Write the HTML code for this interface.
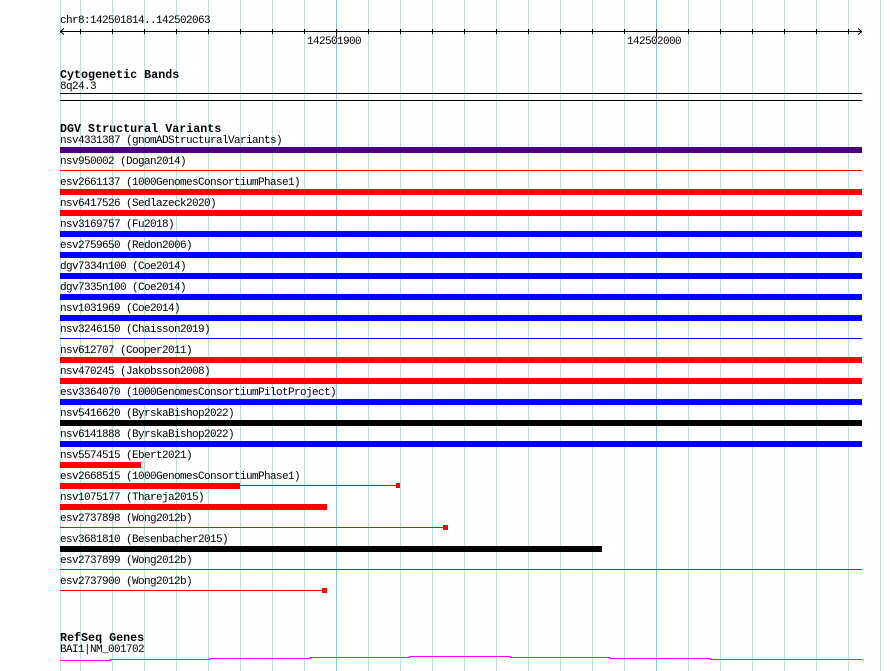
<!DOCTYPE html>
<html><head><meta charset="utf-8"><style>
html,body{margin:0;padding:0;background:#fff;width:890px;height:671px;overflow:hidden}
svg{display:block}
text{font-family:"Liberation Mono",monospace;font-size:11px;letter-spacing:-0.6px;fill:#000}
.b{font-size:11.7px;font-weight:bold;letter-spacing:0}
</style></head><body>
<svg width="890" height="671" viewBox="0 0 890 671" xmlns="http://www.w3.org/2000/svg" shape-rendering="crispEdges">
<g stroke="#b6e0e6" stroke-width="1">
<line x1="60.5" y1="0" x2="60.5" y2="671"/>
<line x1="80.5" y1="0" x2="80.5" y2="671"/><line x1="112.5" y1="0" x2="112.5" y2="671"/><line x1="144.5" y1="0" x2="144.5" y2="671"/><line x1="176.5" y1="0" x2="176.5" y2="671"/><line x1="208.5" y1="0" x2="208.5" y2="671"/><line x1="240.5" y1="0" x2="240.5" y2="671"/><line x1="272.5" y1="0" x2="272.5" y2="671"/><line x1="304.5" y1="0" x2="304.5" y2="671"/><line x1="368.5" y1="0" x2="368.5" y2="671"/><line x1="400.5" y1="0" x2="400.5" y2="671"/><line x1="432.5" y1="0" x2="432.5" y2="671"/><line x1="464.5" y1="0" x2="464.5" y2="671"/><line x1="496.5" y1="0" x2="496.5" y2="671"/><line x1="528.5" y1="0" x2="528.5" y2="671"/><line x1="560.5" y1="0" x2="560.5" y2="671"/><line x1="592.5" y1="0" x2="592.5" y2="671"/><line x1="624.5" y1="0" x2="624.5" y2="671"/><line x1="688.5" y1="0" x2="688.5" y2="671"/><line x1="720.5" y1="0" x2="720.5" y2="671"/><line x1="752.5" y1="0" x2="752.5" y2="671"/><line x1="784.5" y1="0" x2="784.5" y2="671"/><line x1="816.5" y1="0" x2="816.5" y2="671"/><line x1="848.5" y1="0" x2="848.5" y2="671"/><line x1="880.5" y1="0" x2="880.5" y2="671"/>
</g>
<g stroke="#8ec4dc"><line x1="336.5" y1="0" x2="336.5" y2="671"/><line x1="656.5" y1="0" x2="656.5" y2="671"/></g>
<!-- ruler -->
<text x="60" y="23">chr8:142501814..142502063</text>
<g stroke="#000">
<line x1="60" y1="31.5" x2="862" y2="31.5"/>
<line x1="60" y1="31.5" x2="64" y2="28.5"/><line x1="60" y1="31.5" x2="64" y2="34.5"/>
<line x1="862" y1="31.5" x2="858" y2="28.5"/><line x1="862" y1="31.5" x2="858" y2="34.5"/>
<path d="M80.5 29v5M112.5 29v5M144.5 29v5M176.5 29v5M208.5 29v5M240.5 29v5M272.5 29v5M304.5 29v5M368.5 29v5M400.5 29v5M432.5 29v5M464.5 29v5M496.5 29v5M528.5 29v5M560.5 29v5M592.5 29v5M624.5 29v5M688.5 29v5M720.5 29v5M752.5 29v5M784.5 29v5M816.5 29v5M848.5 29v5M336.5 29v8M656.5 29v8"/>
</g>
<text x="307" y="44">142501900</text>
<text x="627" y="44">142502000</text>
<!-- cyto -->
<text class="b" x="60" y="78">Cytogenetic Bands</text>
<text x="60" y="89">8q24.3</text>
<rect x="60" y="93" width="802" height="1" fill="#000"/>
<rect x="60" y="100" width="802" height="1" fill="#000"/>
<!-- DGV -->
<text class="b" x="60" y="132">DGV Structural Variants</text>
<g>
<text x="60" y="143">nsv4331387 (gnomADStructuralVariants)</text><rect x="60" y="147" width="802" height="6" fill="#4b0082"/>
<text x="60" y="164">nsv950002 (Dogan2014)</text><rect x="60" y="170" width="802" height="1" fill="#f00"/>
<text x="60" y="185">esv2661137 (1000GenomesConsortiumPhase1)</text><rect x="60" y="189" width="802" height="6" fill="#f00"/>
<text x="60" y="206">nsv6417526 (Sedlazeck2020)</text><rect x="60" y="210" width="802" height="6" fill="#f00"/>
<text x="60" y="227">nsv3169757 (Fu2018)</text><rect x="60" y="231" width="802" height="6" fill="#00f"/>
<text x="60" y="248">esv2759650 (Redon2006)</text><rect x="60" y="252" width="802" height="6" fill="#00f"/>
<text x="60" y="269">dgv7334n100 (Coe2014)</text><rect x="60" y="273" width="802" height="6" fill="#00f"/>
<text x="60" y="290">dgv7335n100 (Coe2014)</text><rect x="60" y="294" width="802" height="6" fill="#00f"/>
<text x="60" y="311">nsv1031969 (Coe2014)</text><rect x="60" y="315" width="802" height="6" fill="#00f"/>
<text x="60" y="332">nsv3246150 (Chaisson2019)</text><rect x="60" y="338" width="802" height="1" fill="#00f"/>
<text x="60" y="353">nsv612707 (Cooper2011)</text><rect x="60" y="357" width="802" height="6" fill="#f00"/>
<text x="60" y="374">nsv470245 (Jakobsson2008)</text><rect x="60" y="378" width="802" height="6" fill="#f00"/>
<text x="60" y="395">esv3364070 (1000GenomesConsortiumPilotProject)</text><rect x="60" y="399" width="802" height="6" fill="#00f"/>
<text x="60" y="416">nsv5416620 (ByrskaBishop2022)</text><rect x="60" y="420" width="802" height="6" fill="#000"/>
<text x="60" y="437">nsv6141888 (ByrskaBishop2022)</text><rect x="60" y="441" width="802" height="6" fill="#00f"/>
<text x="60" y="458">nsv5574515 (Ebert2021)</text><rect x="60" y="462" width="81" height="6" fill="#f00"/>
<text x="60" y="479">esv2668515 (1000GenomesConsortiumPhase1)</text><rect x="60" y="483" width="180" height="6" fill="#f00"/><rect x="60" y="485" width="338" height="1" fill="#f00"/><rect x="396" y="483" width="4" height="5" fill="#f00"/>
<text x="60" y="500">nsv1075177 (Thareja2015)</text><rect x="60" y="504" width="267" height="6" fill="#f00"/>
<text x="60" y="521">esv2737898 (Wong2012b)</text><rect x="60" y="527" width="385" height="1" fill="#f00"/><rect x="443" y="525" width="5" height="5" fill="#f00"/>
<text x="60" y="542">esv3681810 (Besenbacher2015)</text><rect x="60" y="546" width="542" height="6" fill="#000"/>
<text x="60" y="563">esv2737899 (Wong2012b)</text><rect x="60" y="569" width="802" height="1" fill="#f00"/>
<text x="60" y="584">esv2737900 (Wong2012b)</text><rect x="60" y="590" width="263" height="1" fill="#f00"/><rect x="322" y="588" width="5" height="5" fill="#f00"/>
</g>
<!-- RefSeq -->
<text class="b" x="60" y="641">RefSeq Genes</text>
<text x="60" y="652">BAI1|NM_001702</text>
<path d="M60 660.5H110V659.5H210V658.5H310V657.5H410V656.5H510V657.5H610V658.5H710V659.5H862" stroke="#f0f" fill="none"/>
</svg>
</body></html>
